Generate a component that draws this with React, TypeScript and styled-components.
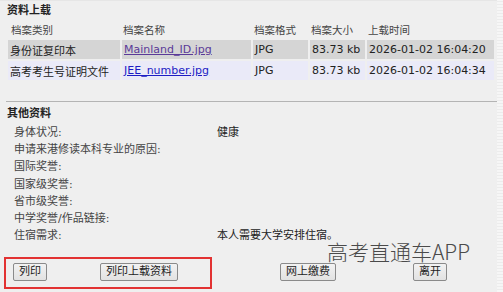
import React from 'react';
import styled, { createGlobalStyle } from 'styled-components';

const GlobalStyle = createGlobalStyle`
  html, body {
    margin: 0;
    padding: 0;
    background: #f5f5f5;
  }
  body {
    font-family: "DejaVu Sans", "Noto Sans CJK SC", sans-serif;
    font-size: 11px;
    color: #222;
  }
`;

const files = [
  { type: '身份证复印本', name: 'Mainland_ID.jpg', fmt: 'JPG', size: '83.73 kb', time: '2026-01-02 16:04:20', visited: true },
  { type: '高考考生号证明文件', name: 'JEE_number.jpg', fmt: 'JPG', size: '83.73 kb', time: '2026-01-02 16:04:34', visited: false },
];

const others = [
  { label: '身体状况:', value: '健康' },
  { label: '申请来港修读本科专业的原因:', value: '' },
  { label: '国际奖誉:', value: '' },
  { label: '国家级奖誉:', value: '' },
  { label: '省市级奖誉:', value: '' },
  { label: '中学奖誉/作品链接:', value: '' },
  { label: '住宿需求:', value: '本人需要大学安排住宿。' },
];

export default function App() {
  return (
    <Page>
      <GlobalStyle />
      <Panel>
        <SectionTitle>资料上载</SectionTitle>
        <FileTable>
          <colgroup>
            <col style={{ width: 112 }} />
            <col style={{ width: 129 }} />
            <col style={{ width: 55 }} />
            <col style={{ width: 55 }} />
            <col style={{ width: 127 }} />
          </colgroup>
          <thead>
            <tr>
              <HeadCell $indent>档案类别</HeadCell>
              <HeadCell>档案名称</HeadCell>
              <HeadCell>档案格式</HeadCell>
              <HeadCell>档案大小</HeadCell>
              <HeadCell>上载时间</HeadCell>
            </tr>
          </thead>
          <tbody>
            {files.map((f, i) => (
              <FileRow key={f.name} $alt={i % 2 === 1}>
                <Cell>{f.type}</Cell>
                <Cell>
                  <FileLink href="#" $visited={f.visited}>{f.name}</FileLink>
                </Cell>
                <Cell>{f.fmt}</Cell>
                <Cell>{f.size}</Cell>
                <Cell>{f.time}</Cell>
              </FileRow>
            ))}
          </tbody>
        </FileTable>

        <Divider />

        <SectionTitle>其他资料</SectionTitle>
        <InfoGrid>
          {others.map((o) => (
            <React.Fragment key={o.label}>
              <InfoLabel>{o.label}</InfoLabel>
              <InfoValue>{o.value}</InfoValue>
            </React.Fragment>
          ))}
        </InfoGrid>

        <ButtonRow>
          <ActionButton>列印</ActionButton>
          <ActionButton>列印上载资料</ActionButton>
          <ActionButton>网上缴费</ActionButton>
          <ActionButton>离开</ActionButton>
        </ButtonRow>

        <Highlight />
        <Watermark>高考直通车APP</Watermark>
      </Panel>
    </Page>
  );
}

const Page = styled.div`
  width: 503px;
  height: 292px;
  overflow: hidden;
  background: repeating-linear-gradient(
    0deg,
    #f6f6f6 0px,
    #f6f6f6 2px,
    #ececec 2px,
    #ececec 3px
  );
`;

const Panel = styled.div`
  position: relative;
  width: 497px;
  height: 292px;
  box-sizing: border-box;
  background: #efefef;
  border-top: 1px solid #e6e6e6;
  padding: 3px 0 0 6px;
`;

const SectionTitle = styled.div`
  font-weight: bold;
  font-size: 11px;
  line-height: 14px;
  height: 14px;
  padding-left: 1px;
  color: #222;
`;

const FileTable = styled.table`
  border-collapse: separate;
  border-spacing: 2px;
  table-layout: fixed;
  width: 488px;
  margin: 0;
`;

const HeadCell = styled.th<{ $indent?: boolean }>`
  height: 18px;
  padding: 0 0 0 ${(p) => (p.$indent ? 3 : 1)}px;
  text-align: left;
  font-weight: normal;
  font-size: 10.5px;
  color: #444;
  white-space: nowrap;
`;

const FileRow = styled.tr<{ $alt: boolean }>`
  background: ${(p) => (p.$alt ? '#eaeaf8' : '#d5d5d5')};
`;

const Cell = styled.td`
  height: 19px;
  padding: 0 0 0 2px;
  font-size: 11px;
  color: #222;
  white-space: nowrap;
  overflow: hidden;
`;

const FileLink = styled.a<{ $visited: boolean }>`
  color: ${(p) => (p.$visited ? '#5a3a98' : '#1c1cc4')};
  text-decoration: underline;
`;

const Divider = styled.div`
  height: 1px;
  width: 491px;
  background: #b4b4b4;
  margin: 19px 0 5px 0;
`;

const InfoGrid = styled.div`
  display: grid;
  grid-template-columns: 203px 1fr;
  grid-auto-rows: 17.3px;
  align-items: center;
  padding: 1px 0 0 8px;
`;

const InfoLabel = styled.div`
  font-size: 11px;
  color: #444;
  white-space: nowrap;
`;

const InfoValue = styled.div`
  font-size: 11px;
  color: #222;
  white-space: nowrap;
`;

const ButtonRow = styled.div`
  display: grid;
  grid-template-columns: 87px 180px 133px auto;
  justify-items: start;
  padding-left: 7px;
  margin-top: 20px;
`;

const ActionButton = styled.button`
  height: 18px;
  padding: 0 5px;
  font-family: "DejaVu Sans", "Noto Sans CJK SC", sans-serif;
  font-size: 11px;
  line-height: 16px;
  color: #222;
  background: linear-gradient(#f2f2f2, #e2e2e2);
  border: 1px solid #8a8a8a;
  border-radius: 2px;
  cursor: pointer;
`;

const Highlight = styled.div`
  position: absolute;
  left: 4px;
  top: 256px;
  width: 208px;
  height: 32px;
  box-sizing: border-box;
  border: 2px solid #e23232;
  pointer-events: none;
`;

const Watermark = styled.div`
  position: absolute;
  left: 327px;
  top: 236px;
  font-family: "Noto Sans CJK SC", sans-serif;
  font-weight: 300;
  font-size: 21px;
  line-height: 28px;
  color: #4a4a4a;
  white-space: nowrap;
  pointer-events: none;
`;
